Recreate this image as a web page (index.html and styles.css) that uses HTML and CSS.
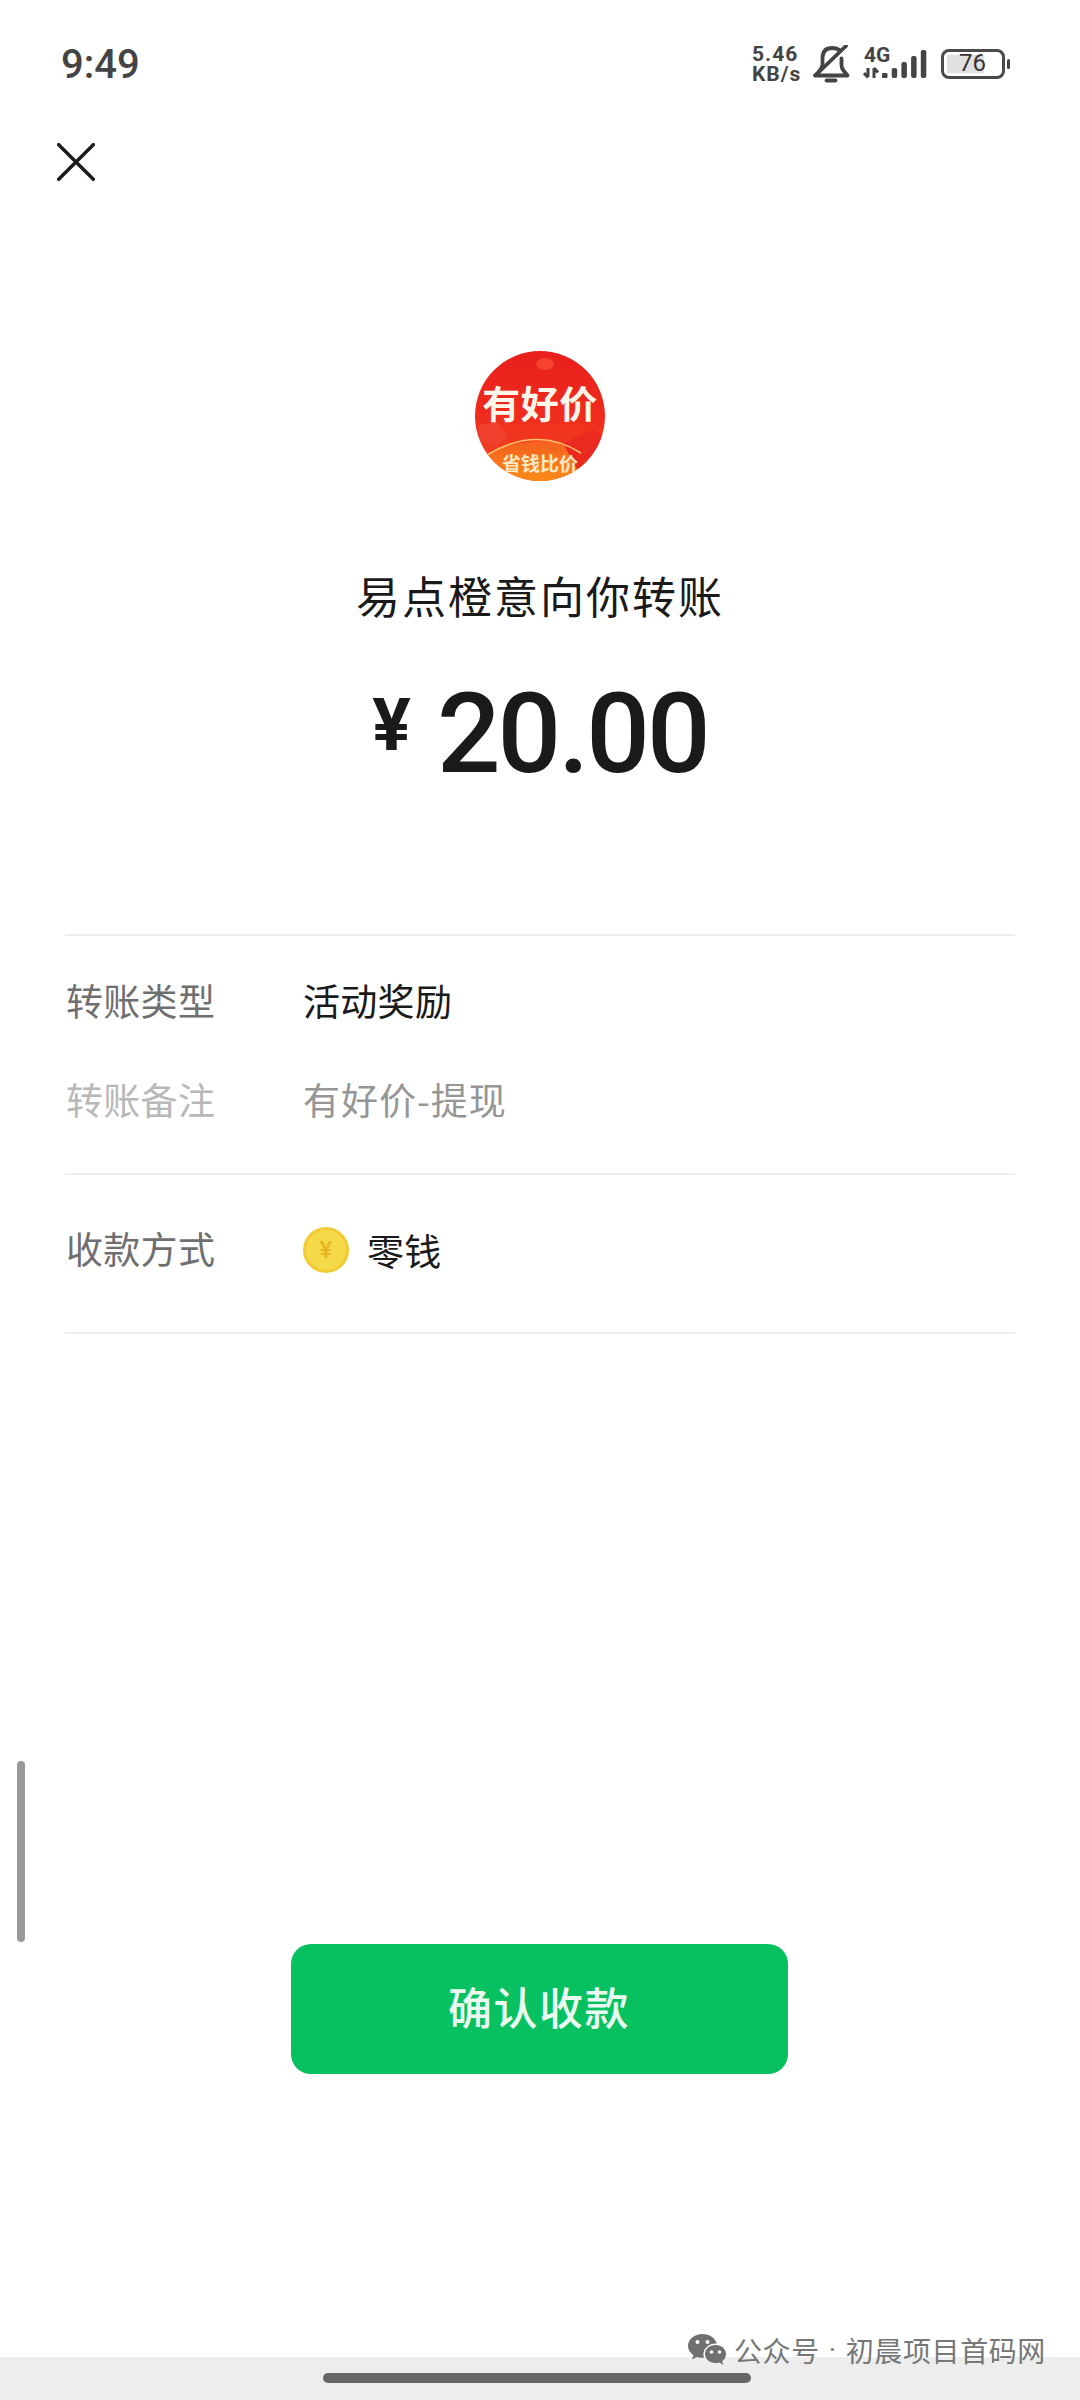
FILE: index.html
```html
<!DOCTYPE html>
<html lang="zh-CN">

<head>
  <meta charset="UTF-8">
  <meta name="viewport" content="width=device-width, initial-scale=1.0">
  <title>确认收款</title>
  <link rel="stylesheet" href="styles.css">
</head>

<body>
  <div class="page">
    <!-- Status bar -->
    <header class="status-bar">
      <span class="time">9:49</span>
      <div class="status-icons">
        <span class="net-speed">5.46<br>KB/s</span>
        <svg class="bell" viewBox="0 0 38 38" fill="none" stroke="#444" stroke-width="3.8" stroke-linecap="round" stroke-linejoin="round">
          <path d="M27 5.500 Q24 3 19 3 Q10 3 9.500 12.500 L9.500 20 Q9 23 5 27.500 L2 30.500 L34.500 30.500 L30.500 25.500 Q28.500 23 28.500 20 L28.500 13.500" />
          <path d="M33 1 L6 27" />
          <path d="M13.500 35.500 L22.500 35.500" />
        </svg>
        <svg class="signal" viewBox="0 -4 64 46">
          <text class="signal-label" x="1" y="17">4G</text>
          <path d="M5 23 L5 32 M1 28 L5 32.500 M11 33 L11 23 M11 23 L15 27.500" stroke="#444" stroke-width="3" fill="none" />
          <rect x="19" y="28" width="5.500" height="5" rx="1" fill="#444" />
          <rect x="28.700" y="23" width="5.500" height="10" rx="2" fill="#444" />
          <rect x="38.400" y="17" width="5.500" height="16" rx="2" fill="#444" />
          <rect x="48.100" y="11" width="5.500" height="22" rx="2" fill="#444" />
          <rect x="57.800" y="5" width="5.500" height="28" rx="2" fill="#444" />
        </svg>
        <div class="battery">
          <div class="battery-body">
            <div class="battery-level"></div>
            <span class="battery-num">76</span>
          </div>
          <div class="battery-nub"></div>
        </div>
      </div>
    </header>

    <!-- Close -->
    <div class="close-row">
      <svg class="close" viewBox="0 0 40 40" stroke="#1a1a1a" stroke-width="3.600">
        <path d="M0.500 0.500 L39.500 39.500 M39.500 0.500 L0.500 39.500" />
      </svg>
    </div>

    <!-- Payer -->
    <section class="payer">
      <div class="logo">
        <svg class="logo-art" viewBox="0 0 130 130" fill="none">
          <defs>
            <linearGradient id="logo-arc" x1="0" y1="0" x2="0" y2="1">
              <stop offset="0" stop-color="#f4601f" />
              <stop offset="1" stop-color="#fb8a1a" />
            </linearGradient>
          </defs>
          <path d="M0 110 Q62 72 130 106 L130 130 L0 130 Z" fill="url(#logo-arc)" />
          <path d="M3 74 L22 71 L33 86 L20 96 L6 90 Z" fill="#f0412e" />
          <path d="M88 92 L118 78 L130 88 L128 112 L104 122 Z" fill="#ea2a20" />
          <path d="M12 104 Q62 74 106 102" stroke="#ffc36a" stroke-width="1.500" />
          <ellipse cx="70" cy="13" rx="9" ry="6" fill="#f4432f" />
        </svg>
        <span class="logo-main">有好价</span>
        <span class="logo-sub">省钱比价</span>
      </div>
      <h1 class="payer-title">易点橙意向你转账</h1>
      <div class="amount"><span class="currency">¥</span><span class="amount-num">20.00</span></div>
    </section>

    <!-- Details -->
    <section class="details details-first">
      <div class="row">
        <span class="row-label">转账类型</span>
        <span class="row-value">活动奖励</span>
      </div>
      <div class="row row-note">
        <span class="row-label">转账备注</span>
        <span class="row-value">有好价-提现</span>
      </div>
    </section>
    <section class="details details-last">
      <div class="row">
        <span class="row-label">收款方式</span>
        <span class="row-value pay-method">
          <span class="coin">¥</span>
          <span class="coin-text">零钱</span>
        </span>
      </div>
    </section>

    <div class="spacer"></div>

    <button class="confirm">确认收款</button>

    <div class="bottom-gap"></div>

    <footer class="nav-band">
      <div class="home-bar"></div>
    </footer>

    <div class="scroll-thumb"></div>

    <!-- Watermark over the nav band -->
    <div class="watermark">
      <svg class="wechat" viewBox="0 0 38 32" fill="#707070">
        <path d="M14.500 0 C6.500 0 0 5.400 0 12 C0 15.800 2.100 19 5.400 21.200 L4 25.500 L9 22.900 C10.800 23.500 12.600 23.800 14.500 23.800 C15 23.800 15.500 23.800 16 23.700 C15.600 22.600 15.400 21.500 15.400 20.300 C15.400 14.200 21 9.400 27.900 9.400 L28.700 9.400 C27.300 4 21.500 0 14.500 0 Z" />
        <path d="M27.500 11 C21.600 11 17 14.900 17 20 C17 25.100 21.600 29 27.500 29 C28.900 29 30.200 28.800 31.400 28.400 L35.200 31 L34.200 27.200 C36.500 25.500 38 22.900 38 20 C38 14.900 33.400 11 27.500 11 Z" />
        <circle cx="9.500" cy="8" r="2" fill="#fff" />
        <circle cx="19.500" cy="8" r="2" fill="#fff" />
        <circle cx="23.500" cy="18" r="1.800" fill="#fff" />
        <circle cx="31.500" cy="18" r="1.800" fill="#fff" />
      </svg>
      <span>公众号</span>
      <span class="watermark-dot">·</span>
      <span>初晨项目首码网</span>
    </div>
  </div>
</body>

</html>
```

FILE: styles.css
```css
* {
  box-sizing: border-box;
}

html,
body {
  margin: 0;
  padding: 0;
  background-color: #fff;
}

body {
  font-family: "Noto Sans CJK SC", "Noto Sans", sans-serif;
  color: #1a1a1a;
}

.page {
  position: relative;
  display: flex;
  flex-direction: column;
  width: 1080px;
  height: 2400px;
  overflow: hidden;
}

/* Status bar */
.status-bar {
  display: flex;
  justify-content: space-between;
  align-items: center;
  height: 64px;
  margin-top: 32px;
  padding: 0 70px 0 61px;
}

.time {
  font-family: Roboto, sans-serif;
  font-size: 40px;
  font-weight: 500;
  color: #444;
}

.status-icons {
  display: flex;
  align-items: center;
}

.net-speed {
  width: 52px;
  font-family: Roboto, sans-serif;
  font-size: 21px;
  font-weight: 700;
  line-height: 20px;
  letter-spacing: 1px;
  white-space: nowrap;
  color: #444;
}

.bell {
  width: 38px;
  height: 38px;
  margin-left: 9px;
}

.signal {
  width: 64px;
  height: 46px;
  margin-left: 12px;
}

.signal-label {
  font-family: Roboto, sans-serif;
  font-size: 21px;
  font-weight: 700;
  fill: #444;
}

.battery {
  display: flex;
  align-items: center;
  margin-left: 14px;
}

.battery-body {
  position: relative;
  display: flex;
  width: 64px;
  height: 30px;
  padding: 3px;
  border: 3.500px solid #4a4a4a;
  border-radius: 8px;
}

.battery-level {
  width: 37px;
  background-color: #e0e0e0;
}

.battery-num {
  position: absolute;
  top: 0;
  left: 15px;
  font-family: Roboto, sans-serif;
  font-size: 24px;
  line-height: 23px;
  color: #333;
}

.battery-nub {
  width: 3px;
  height: 10px;
  margin-left: 2px;
  border-radius: 2px;
  background-color: #444;
}

/* Close */
.close-row {
  height: 38px;
  margin-top: 47px;
  padding-left: 57px;
}

.close {
  display: block;
  width: 38px;
  height: 38px;
}

/* Payer */
.payer {
  display: flex;
  flex-direction: column;
  align-items: center;
  margin-top: 170px;
}

.logo {
  position: relative;
  display: flex;
  flex-direction: column;
  align-items: center;
  width: 130px;
  height: 130px;
  overflow: hidden;
  border-radius: 50%;
  background: linear-gradient(to bottom, #e81f1c 0%, #ef2c1e 50%, #f24a20 100%);
}

.logo-art {
  position: absolute;
  top: 0;
  left: 0;
  width: 130px;
  height: 130px;
}

.logo-main {
  position: relative;
  margin-top: 28px;
  font-size: 38px;
  font-weight: 700;
  line-height: 46px;
  letter-spacing: 0.500px;
  color: #fff6ea;
}

.logo-sub {
  position: relative;
  margin-top: 25px;
  font-size: 19px;
  font-weight: 700;
  line-height: 26px;
  color: #ffe9c4;
}

.payer-title {
  margin: 86px 0 0;
  font-size: 44px;
  font-weight: 400;
  line-height: 56px;
  letter-spacing: 2px;
  color: #1a1a1a;
}

.amount {
  display: flex;
  align-items: center;
  height: 100px;
  margin-top: 61px;
}

.currency {
  margin: 0 26px 17px 0;
  font-family: Roboto, sans-serif;
  font-size: 72px;
  font-weight: 700;
  line-height: 100px;
  color: #1a1a1a;
}

.amount-num {
  font-family: Roboto, sans-serif;
  font-size: 112px;
  font-weight: 500;
  line-height: 100px;
  letter-spacing: -3px;
  color: #1a1a1a;
}

/* Details */
.details {
  margin: 0 65px;
  border-top: 2px solid #eee;
}

.details-first {
  height: 239px;
  margin-top: 150px;
  padding-top: 36px;
}

.details-last {
  height: 161px;
  padding-top: 47px;
  border-bottom: 2px solid #eee;
}

.row {
  display: flex;
  align-items: center;
  height: 56px;
  font-size: 37px;
  letter-spacing: 0.300px;
}

.row-note {
  margin-top: 43px;
}

.row-label {
  width: 238px;
  padding-left: 1px;
  color: #6f6f6f;
}

.row-value {
  color: #1a1a1a;
}

.row-note .row-label {
  color: #b8b8b8;
}

.row-note .row-value {
  letter-spacing: 1px;
  color: #969696;
}

.details-last .row-label {
  padding-bottom: 5px;
}

.pay-method {
  display: flex;
  align-items: center;
}

.coin {
  display: flex;
  justify-content: center;
  align-items: center;
  width: 46px;
  height: 46px;
  border: 3px solid #f2cb34;
  border-radius: 50%;
  background-color: #f6d948;
  font-family: Roboto, sans-serif;
  font-size: 24px;
  font-weight: 500;
  color: #e7b524;
}

.coin-text {
  margin-left: 18px;
}

.spacer {
  flex: 1;
}

/* Button */
.confirm {
  align-self: center;
  width: 497px;
  height: 130px;
  margin-right: 2px;
  padding-bottom: 8px;
  border: none;
  border-radius: 20px;
  background-color: #07c160;
  font-family: "Noto Sans CJK SC", sans-serif;
  font-size: 44px;
  font-weight: 500;
  letter-spacing: 1.500px;
  color: #eafaf0;
}

.bottom-gap {
  height: 283px;
}

/* Bottom band */
.nav-band {
  display: flex;
  justify-content: center;
  height: 43px;
  padding: 16px 7px 0 0;
  background-color: #ededed;
}

.home-bar {
  width: 428px;
  height: 10px;
  border-radius: 5px;
  background-color: #666;
}

.scroll-thumb {
  position: absolute;
  top: 1761px;
  left: 17px;
  width: 8px;
  height: 181px;
  border-radius: 4px;
  background-color: #999;
}

.watermark {
  position: absolute;
  top: 2332px;
  left: 688px;
  display: flex;
  align-items: center;
  height: 36px;
  font-size: 28px;
  line-height: 36px;
  letter-spacing: 0.600px;
  color: #777;
}

.watermark-dot {
  margin: 0 9px 0 9px;
  font-family: Roboto, sans-serif;
}

.wechat {
  width: 38px;
  height: 32px;
  margin-right: 8px;
}
```
